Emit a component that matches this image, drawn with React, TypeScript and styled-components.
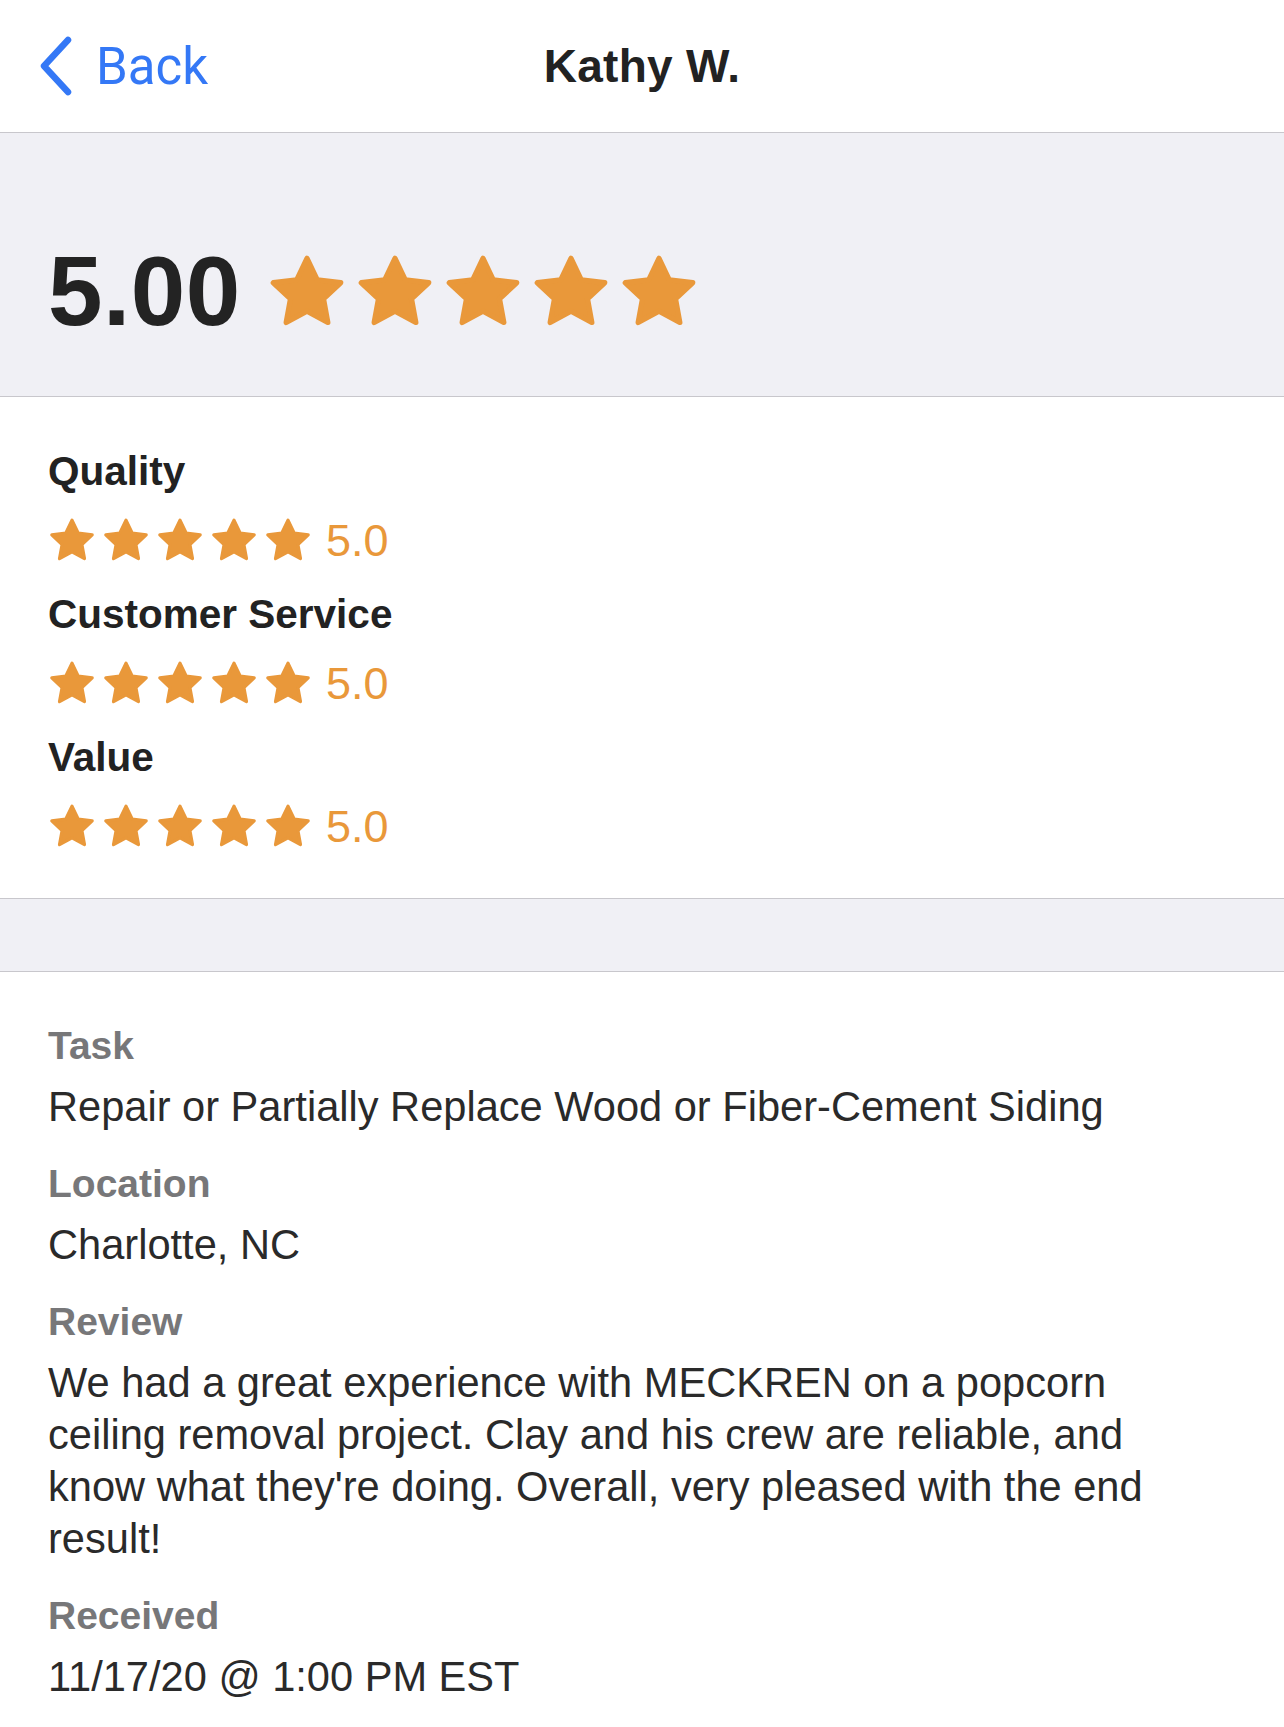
import React from "react";
import styled, { createGlobalStyle } from "styled-components";

const Global = createGlobalStyle`
  html, body { margin: 0; padding: 0; background: #ffffff; }
  body { font-family: "Liberation Sans", Arial, sans-serif; -webkit-font-smoothing: antialiased; }
  * { box-sizing: border-box; }
`;

const ORANGE = "#E9983A";
const BORDER = "#c8c7cc";
const GREY_BG = "#f0f0f5";

const Page = styled.div`
  width: 1284px;
  min-height: 1727px;
  background: #fff;
`;

const NavBar = styled.header`
  height: 133px;
  border-bottom: 1px solid ${BORDER};
  display: grid;
  grid-template-columns: 1fr auto 1fr;
  align-items: center;
  padding: 0 38px;
`;

const BackButton = styled.button`
  justify-self: start;
  display: flex;
  align-items: center;
  gap: 22px;
  background: none;
  border: none;
  padding: 0;
  color: #3478f6;
  font-family: Roboto, "Liberation Sans", sans-serif;
  font-size: 51px;
  font-weight: 400;
  cursor: pointer;
`;

const Title = styled.h1`
  margin: 0;
  font-family: "Liberation Sans", Arial, sans-serif;
  font-size: 46px;
  font-weight: 700;
  color: #222;
  letter-spacing: 0.3px;
`;

const Summary = styled.section`
  background: ${GREY_BG};
  border-bottom: 1px solid ${BORDER};
  height: 264px;
  display: flex;
  align-items: center;
  gap: 26px;
  padding: 52px 48px 0;
`;

const BigScore = styled.div`
  font-family: "Liberation Sans", Arial, sans-serif;
  font-size: 98px;
  font-weight: 700;
  letter-spacing: 0.5px;
  color: #232323;
  line-height: 1;
`;

const StarRow = styled.div<{ $gap: number }>`
  display: flex;
  align-items: center;
  gap: ${(p) => p.$gap}px;
`;

const Ratings = styled.section`
  border-bottom: 1px solid ${BORDER};
  padding: 48px 48px 46px;
  display: flex;
  flex-direction: column;
  gap: 22px;
`;

const RatingGroup = styled.div`
  display: flex;
  flex-direction: column;
  gap: 17px;
`;

const RatingLabel = styled.div`
  font-family: "Liberation Sans", Arial, sans-serif;
  font-size: 40.5px;
  font-weight: 700;
  line-height: 52px;
  color: #222;
`;

const RatingLine = styled.div`
  display: flex;
  align-items: center;
  height: 52px;
  gap: 14px;
`;

const RatingValue = styled.span`
  font-family: "Liberation Sans", Arial, sans-serif;
  font-size: 45px;
  color: ${ORANGE};
  line-height: 1;
`;

const Band = styled.div`
  height: 73px;
  background: ${GREY_BG};
  border-bottom: 1px solid ${BORDER};
`;

const Details = styled.section`
  padding: 48px 64px 40px 48px;
  display: flex;
  flex-direction: column;
  gap: 25px;
`;

const Field = styled.div`
  display: flex;
  flex-direction: column;
  gap: 9px;
`;

const FieldLabel = styled.div`
  font-family: "Liberation Sans", Arial, sans-serif;
  font-size: 39px;
  font-weight: 700;
  line-height: 52px;
  color: #777779;
`;

const FieldValue = styled.div`
  font-family: "Liberation Sans", Arial, sans-serif;
  font-size: 41.6px;
  line-height: 52px;
  color: #2a2a2a;
`;

const Star: React.FC<{ size: number }> = ({ size }) => (
  <svg width={size} height={size * 0.95} viewBox="0 0 24 23" aria-hidden>
    <polygon
      points="12,1.6 15.1,8.1 22.2,9 17,13.9 18.3,21 12,17.6 5.7,21 7,13.9 1.8,9 8.9,8.1"
      fill={ORANGE}
      stroke={ORANGE}
      strokeWidth={1.6}
      strokeLinejoin="round"
    />
  </svg>
);

const Stars: React.FC<{ size: number; gap: number }> = ({ size, gap }) => (
  <StarRow $gap={gap}>
    {[0, 1, 2, 3, 4].map((i) => (
      <Star key={i} size={size} />
    ))}
  </StarRow>
);

const ratings = [
  { label: "Quality", value: "5.0" },
  { label: "Customer Service", value: "5.0" },
  { label: "Value", value: "5.0" },
];

const details = [
  { label: "Task", value: "Repair or Partially Replace Wood or Fiber-Cement Siding" },
  { label: "Location", value: "Charlotte, NC" },
  {
    label: "Review",
    value:
      "We had a great experience with MECKREN on a popcorn ceiling removal project. Clay and his crew are reliable, and know what they're doing. Overall, very pleased with the end result!",
  },
  { label: "Received", value: "11/17/20 @ 1:00 PM EST" },
];

export default function App() {
  return (
    <Page>
      <Global />
      <NavBar>
        <BackButton>
          <svg width="36" height="60" viewBox="0 0 36 60" aria-hidden>
            <polyline
              points="30,4 6,30 30,56"
              fill="none"
              stroke="#3478f6"
              strokeWidth="6.5"
              strokeLinecap="round"
              strokeLinejoin="round"
            />
          </svg>
          Back
        </BackButton>
        <Title>Kathy W.</Title>
        <div />
      </NavBar>

      <Summary>
        <BigScore>5.00</BigScore>
        <Stars size={80} gap={8} />
      </Summary>

      <Ratings>
        {ratings.map((r) => (
          <RatingGroup key={r.label}>
            <RatingLabel>{r.label}</RatingLabel>
            <RatingLine>
              <Stars size={48} gap={6} />
              <RatingValue>{r.value}</RatingValue>
            </RatingLine>
          </RatingGroup>
        ))}
      </Ratings>

      <Band />

      <Details>
        {details.map((d) => (
          <Field key={d.label}>
            <FieldLabel>{d.label}</FieldLabel>
            <FieldValue>{d.value}</FieldValue>
          </Field>
        ))}
      </Details>
    </Page>
  );
}
